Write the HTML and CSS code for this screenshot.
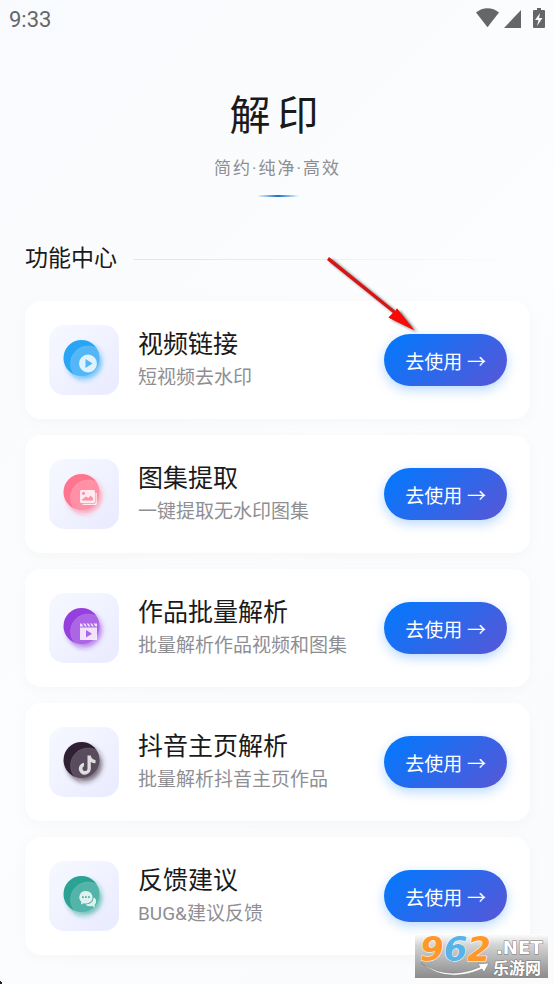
FILE: index.html
```html
<!DOCTYPE html>
<html lang="zh-CN">
<head>
<meta charset="utf-8">
<meta name="viewport" content="width=device-width, initial-scale=1">
<title>解印</title>
<link rel="stylesheet" href="styles.css">
</head>
<body>
<svg width="0" height="0" class="defs" aria-hidden="true">
  <defs>
    <filter id="soft" x="-50%" y="-50%" width="200%" height="200%"><feGaussianBlur stdDeviation="2.4"/></filter>
    <g id="discs">
      <circle cx="35.5" cy="37" r="17.5" fill="currentColor" opacity=".8" filter="url(#soft)"/>
      <circle cx="32.5" cy="33" r="18" fill="currentColor"/>
      <circle cx="39" cy="38.5" r="17.5" fill="#fff" fill-opacity=".2" stroke="#fff" stroke-opacity=".12"/>
    </g>
  </defs>
</svg>

<header class="status">
  <span class="time">9:33</span>
  <svg class="status-icons" width="70" height="22" viewBox="0 0 70 22" fill="#666" aria-hidden="true">
    <path d="M12.5 20.200 1 5.500C7.500-.2 17.500-.2 24 5.500Z"/>
    <path d="M46 3v18H29Z"/>
    <path fill-rule="evenodd" d="M62 1h4v2h3q1 0 1 1v16q0 1-1 1h-10q-1 0-1-1V4q0-1 1-1h3Zm3 5-5 7h3.500l-1.500 6 5.500-8H64Z"/>
  </svg>
</header>

<main class="page">
  <div class="hero">
    <h1>解印</h1>
    <p>简约·纯净·高效</p>
    <div class="accent"></div>
  </div>

  <div class="section-head">
    <h2>功能中心</h2>
    <div class="rule"></div>
  </div>

  <ul class="cards">
    <li class="card">
      <svg class="icon blue" viewBox="0 0 70 70" aria-hidden="true"><use href="#discs"/>
        <path class="glyph" fill-rule="evenodd" d="M39 29.500a9 9 0 1 0 0 18a9 9 0 1 0 0-18ZM36.500 34v9l7-4.500Z"/>
      </svg>
      <div class="info"><h3>视频链接</h3><p>短视频去水印</p></div>
      <button type="button" class="go">去使用 →</button>
    </li>
    <li class="card">
      <svg class="icon pink" viewBox="0 0 70 70" aria-hidden="true"><use href="#discs"/>
        <path class="glyph" fill-rule="evenodd" d="M32.500 31h12q1.500 0 1.500 1.500v10q0 1.500-1.500 1.500h-12q-1.500 0-1.500-1.500v-10q0-1.500 1.500-1.500ZM34.500 32.700a1.600 1.600 0 1 0 0 3.200a1.600 1.600 0 1 0 0-3.200ZM33 41.500h11v-2.500l-2.500-2.500-2 2.500-2.500-1.500-4 3Z"/>
        <path class="glyph" d="M46.600 34h1.200v10.500q0 1.500-1.500 1.500H33.500v-1.200H45q1.600 0 1.600-1.600Z"/>
      </svg>
      <div class="info"><h3>图集提取</h3><p>一键提取无水印图集</p></div>
      <button type="button" class="go">去使用 →</button>
    </li>
    <li class="card">
      <svg class="icon purple" viewBox="0 0 70 70" aria-hidden="true"><use href="#discs"/>
        <path class="glyph" fill-rule="evenodd" d="M31 34.500h17V47H31ZM37 37v7.500l6-3.700Z"/>
        <path class="glyph" d="M31 30.500h1.500l2 3H31ZM34 30.500h2l2 3h-2ZM37.500 30.500h2l2 3h-2ZM41 30.500h2l2 3h-2ZM44.500 30.500H48v3h-1.500Z"/>
      </svg>
      <div class="info"><h3>作品批量解析</h3><p>批量解析作品视频和图集</p></div>
      <button type="button" class="go">去使用 →</button>
    </li>
    <li class="card">
      <svg class="icon dark" viewBox="0 0 70 70" aria-hidden="true"><use href="#discs"/>
        <path class="glyph" d="M38.500 28.500h3.300q.5 4 4.700 4.400v3.400q-2.700 0-4.700-1.400v6.800a6 6 0 1 1-6.800-6v3.600a2.500 2.500 0 1 0 3.500 2.400Z"/>
      </svg>
      <div class="info"><h3>抖音主页解析</h3><p>批量解析抖音主页作品</p></div>
      <button type="button" class="go">去使用 →</button>
    </li>
    <li class="card">
      <svg class="icon green" viewBox="0 0 70 70" aria-hidden="true"><use href="#discs"/>
        <path class="glyph" fill-rule="evenodd" d="M36.500 30a6.800 6.300 0 1 1-1.700 12.300L32 43.500l.3-2.700A6.500 6.300 0 0 1 36.500 30ZM33 35.300v1.800h1.800v-1.800ZM36 35.300v1.800h1.800v-1.800ZM39 35.300v1.800h1.800v-1.800Z"/>
        <path class="glyph" d="M44.700 36.500q3 1.500 2.300 4.800-.3 1.600-1.500 2.600l.2 2.600-2.500-1.400q-4.200.8-6.700-1.700 7.200 0 8.200-6.900Z"/>
      </svg>
      <div class="info"><h3>反馈建议</h3><p>BUG&amp;建议反馈</p></div>
      <button type="button" class="go">去使用 →</button>
    </li>
  </ul>

  <svg class="pointer" width="100" height="84" viewBox="0 0 100 84" aria-hidden="true">
    <defs><filter id="arrowBlur" x="-20%" y="-20%" width="140%" height="140%"><feGaussianBlur stdDeviation="1.6"/></filter></defs>
    <path d="M6 5 4 8 70 61l-4.500 4.500L91 78 74 56.500 72.500 59Z" fill="#222" opacity=".65" filter="url(#arrowBlur)" transform="translate(3 2)"/>
    <path d="M6 5 4 8 70 61l-4.500 4.500L91 78 74 56.500 72.500 59Z" fill="#d81414"/>
    <path d="m70 61-4.500 4.500L91 78 74 56.500 72.500 59Z" fill="#f80a08"/>
  </svg>
</main>

<svg class="watermark" width="133" height="52" viewBox="0 -8 133 52" role="img" aria-label="962.NET 乐游网">
  <defs><linearGradient id="wm" x2="0" y2="1"><stop stop-color="#fff"/><stop offset=".25" stop-color="#d4d4d4"/><stop offset="1" stop-color="#8b8b8b"/></linearGradient></defs>
  <rect width="133" height="44" fill="url(#wm)"/>
  <path d="M6 29q27 18 59 4l-2-3 11-1-5 9-2-3Q31 50 6 29Z" fill="#fff" stroke="#777" stroke-width=".5"/>
  <text class="digits" x="5" y="27"><tspan fill="#ff982b">9</tspan><tspan fill="#58b4e8">6</tspan><tspan fill="#ff982b">2</tspan></text>
  <text class="net" x="81" y="20">.NET</text>
  <text class="site" x="78" y="40">乐游网</text>
</svg>
<svg class="corner" width="3" height="4" viewBox="0 0 3 4" aria-hidden="true"><path d="M0 1h1v1h1v2H0Z" fill="#222"/></svg>
</body>
</html>
```

FILE: styles.css
```css
* {
  box-sizing: border-box;
  margin: 0;
  padding: 0;
}

body {
  position: relative;
  min-height: 100vh;
  background: linear-gradient(135deg, #f9fafd, #fcfdfe 50%, #fafbfd);
  color: #1a1a1a;
  font-family: Roboto, "Noto Sans CJK SC", sans-serif;
  font-weight: 400;
}

h1, h2, h3 {
  font-weight: 400;
}

.defs {
  position: absolute;
}

.status {
  display: flex;
  justify-content: space-between;
  align-items: center;
  height: 38px;
  padding: 0 9px;
}

.time {
  color: #666;
  font-size: 22px;
}

.status-icons {
  margin-bottom: 2px;
}

.page {
  position: relative;
  padding: 48px 24px 28px 25px;
}

.hero {
  display: flex;
  flex-direction: column;
  align-items: center;
}

.hero h1 {
  font-size: 41px;
  line-height: 60px;
  letter-spacing: 7px;
}

.hero p {
  margin-top: 10px;
  color: #8e8e93;
  font-size: 17px;
  line-height: 24px;
  letter-spacing: 2px;
}

.accent {
  width: 42px;
  height: 2px;
  margin-top: 15px;
  background: linear-gradient(90deg, transparent, #1672cc, transparent);
}

.section-head {
  display: flex;
  align-items: center;
  gap: 17px;
  margin-top: 44px;
}

.section-head h2 {
  font-size: 23px;
  line-height: 36px;
}

.rule {
  flex: 1;
  height: 1px;
  background: linear-gradient(90deg, #e1e3e6, transparent);
}

.cards {
  display: grid;
  gap: 16px;
  margin-top: 24px;
  list-style: none;
}

.card {
  display: flex;
  align-items: center;
  padding: 24px 23px 24px 24px;
  border-radius: 16px;
  background: #fff;
  box-shadow: 0 3px 16px rgba(0, 0, 0, 0.03);
}

.icon {
  flex: none;
  width: 70px;
  height: 70px;
  border-radius: 15px;
  background: linear-gradient(135deg, #f7f9ff, #e9ebff);
}

.glyph {
  fill: #fff;
  fill-opacity: 0.82;
}

.blue { color: #29a5f5; }
.pink { color: #ff7590; }
.purple { color: #963fdf; }
.dark { color: #302034; }
.green { color: #2aa294; }

.info {
  flex: 1;
  margin-left: 19px;
}

.info h3 {
  font-size: 25px;
  line-height: 36px;
}

.info p {
  color: #8e8e93;
  font-size: 19px;
  line-height: 30px;
}

.go {
  height: 52px;
  padding: 0 21px;
  border: 0;
  border-radius: 26px;
  background: linear-gradient(135deg, #007aff, #5856d6);
  box-shadow: 0 4px 12px rgba(0, 122, 255, 0.28);
  color: #fff;
  font: inherit;
  font-size: 19px;
  white-space: nowrap;
}

.pointer {
  position: absolute;
  top: 214px;
  right: 131px;
  pointer-events: none;
}

.watermark {
  position: absolute;
  right: 6px;
  bottom: 6px;
}

.digits {
  font: italic 700 34px "DejaVu Sans", sans-serif;
  stroke: #fff;
  stroke-width: 1px;
  paint-order: stroke;
}

.net {
  fill: #fff;
  stroke: #777;
  stroke-width: 1px;
  paint-order: stroke;
  font: 700 18px "DejaVu Sans", sans-serif;
}

.site {
  fill: #fff;
  stroke: #777;
  stroke-width: 1px;
  paint-order: stroke;
  font: 700 16px "DejaVu Sans", "Noto Sans CJK SC", sans-serif;
}

.corner {
  position: absolute;
  bottom: 0;
  left: 0;
}
```
